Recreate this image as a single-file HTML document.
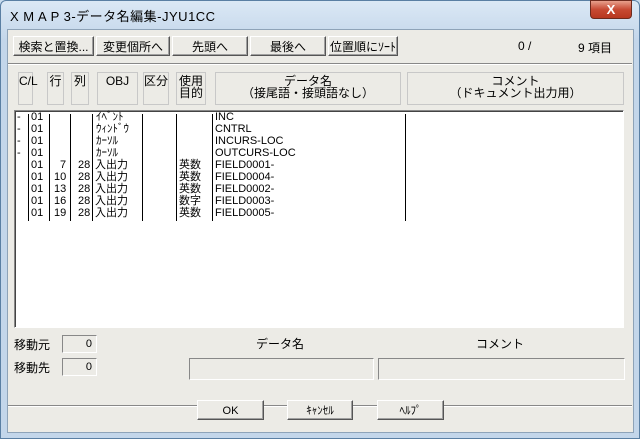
<html><head><style>
body{margin:0;width:640px;height:439px;background:#c9dcee;position:relative;overflow:hidden;font-family:"Liberation Sans","Noto Sans CJK JP",sans-serif;font-size:12px;color:#000}
.a{position:absolute;white-space:nowrap}
.frame{left:0;top:0;width:638px;height:437px;border:1px solid #5a7fa3;border-radius:6px 6px 0 0;background:linear-gradient(#dbe8f5,#c3d6ea 40px,#c3d6ea)}
.client{left:7px;top:29px;width:625px;height:402px;background:#ecebe6;border:1px solid #8ea3b8}
.btn{position:absolute;height:20px;background:#ecebe6;border:1px solid;border-color:#fff #555 #555 #fff;box-shadow:inset -1px -1px 0 #a0a0a0;text-align:center;line-height:20px;font-size:12px;box-sizing:border-box;white-space:nowrap}
.hd{position:absolute;top:72px;height:33px;border:1px solid #c8c8c8;font-size:12px;line-height:12px;text-align:center;box-sizing:border-box;padding-top:2px;white-space:nowrap}
.row{position:absolute;left:0;width:600px;height:12px;font-size:11px;line-height:12px;white-space:nowrap}
.row span{position:absolute;white-space:nowrap}
.vl{position:absolute;top:3px;height:107px;width:1px;background:#000}
.sunk{position:absolute;border:1px solid;border-color:#888 #fff #fff #888;box-sizing:border-box}
</style></head><body>
<div class="a frame"></div>
<div class="a" style="left:10px;top:6px;font-size:13px;letter-spacing:0.5px">X M A P 3-データ名編集-JYU1CC</div>
<div class="a" style="left:590px;top:0;width:42px;height:19px;border-radius:0 0 4px 4px;background:linear-gradient(#e8a08c,#c74a33 50%,#b83820);border:1px solid #6d2a1d;box-sizing:border-box;color:#fff;text-align:center;font-weight:bold;line-height:17px;font-size:13px">X</div>
<div class="a client"></div>
<div class="a" style="left:8px;top:63px;width:624px;height:1px;background:#888;border-bottom:1px solid #fff"></div>
<div class="btn" style="left:13px;top:36px;width:81px">検索と置換...</div>
<div class="btn" style="left:96px;top:36px;width:74px">変更個所へ</div>
<div class="btn" style="left:172px;top:36px;width:76px">先頭へ</div>
<div class="btn" style="left:250px;top:36px;width:76px">最後へ</div>
<div class="btn" style="left:328px;top:36px;width:70px">位置順にｿｰﾄ</div>
<div class="a" style="left:518px;top:39px">0 /</div>
<div class="a" style="left:578px;top:39px">9 項目</div>
<div class="hd" style="left:18px;width:15px">C/L</div>
<div class="hd" style="left:47px;width:17px">行</div>
<div class="hd" style="left:71px;width:18px">列</div>
<div class="hd" style="left:97px;width:41px">OBJ</div>
<div class="hd" style="left:143px;width:26px">区分</div>
<div class="hd" style="left:176px;width:30px">使用<br>目的</div>
<div class="hd" style="left:215px;width:186px">データ名<br>（接尾語・接頭語なし）</div>
<div class="hd" style="left:407px;width:217px">コメント<br>（ドキュメント出力用）</div>
<div class="a" style="left:14px;top:110px;width:610px;height:218px;background:#fff;border:1px solid;border-color:#888 #fff #fff #888;box-shadow:inset 1px 1px 0 #444;box-sizing:border-box">
<div class="vl" style="left:13px"></div><div class="vl" style="left:34px"></div><div class="vl" style="left:55px"></div><div class="vl" style="left:77px"></div><div class="vl" style="left:127px"></div><div class="vl" style="left:161px"></div><div class="vl" style="left:197px"></div><div class="vl" style="left:390px"></div>
</div>
<div class="a" style="left:14px;top:111px;width:610px">
<div class="row" style="top:0"><span style="left:3px">-</span><span style="left:17px">01</span><span style="left:82px">ｲﾍﾞﾝﾄ</span><span style="left:201px">INC</span></div>
<div class="row" style="top:12px"><span style="left:3px">-</span><span style="left:17px">01</span><span style="left:82px">ｳｨﾝﾄﾞｳ</span><span style="left:201px">CNTRL</span></div>
<div class="row" style="top:24px"><span style="left:3px">-</span><span style="left:17px">01</span><span style="left:82px">ｶｰｿﾙ</span><span style="left:201px">INCURS-LOC</span></div>
<div class="row" style="top:36px"><span style="left:3px">-</span><span style="left:17px">01</span><span style="left:82px">ｶｰｿﾙ</span><span style="left:201px">OUTCURS-LOC</span></div>
<div class="row" style="top:48px"><span style="left:17px">01</span><span style="left:46px">7</span><span style="left:64px">28</span><span style="left:81px">入出力</span><span style="left:165px">英数</span><span style="left:201px">FIELD0001-</span></div>
<div class="row" style="top:60px"><span style="left:17px">01</span><span style="left:40px">10</span><span style="left:64px">28</span><span style="left:81px">入出力</span><span style="left:165px">英数</span><span style="left:201px">FIELD0004-</span></div>
<div class="row" style="top:72px"><span style="left:17px">01</span><span style="left:40px">13</span><span style="left:64px">28</span><span style="left:81px">入出力</span><span style="left:165px">英数</span><span style="left:201px">FIELD0002-</span></div>
<div class="row" style="top:84px"><span style="left:17px">01</span><span style="left:40px">16</span><span style="left:64px">28</span><span style="left:81px">入出力</span><span style="left:165px">数字</span><span style="left:201px">FIELD0003-</span></div>
<div class="row" style="top:96px"><span style="left:17px">01</span><span style="left:40px">19</span><span style="left:64px">28</span><span style="left:81px">入出力</span><span style="left:165px">英数</span><span style="left:201px">FIELD0005-</span></div>
</div>
<div class="a" style="left:14px;top:336px">移動元</div>
<div class="sunk" style="left:62px;top:335px;width:35px;height:18px;text-align:right;padding-right:4px;line-height:16px;font-size:11px">0</div>
<div class="a" style="left:14px;top:359px">移動先</div>
<div class="sunk" style="left:62px;top:358px;width:35px;height:18px;text-align:right;padding-right:4px;line-height:16px;font-size:11px">0</div>
<div class="a" style="left:256px;top:335px">データ名</div>
<div class="a" style="left:476px;top:335px">コメント</div>
<div class="sunk" style="left:189px;top:358px;width:185px;height:22px"></div>
<div class="sunk" style="left:378px;top:358px;width:247px;height:22px"></div>
<div class="a" style="left:8px;top:405px;width:624px;height:1px;background:#888;border-bottom:1px solid #fff"></div>
<div class="btn" style="left:197px;top:400px;width:67px;font-size:11px">OK</div>
<div class="btn" style="left:287px;top:400px;width:66px;font-size:11px">ｷｬﾝｾﾙ</div>
<div class="btn" style="left:377px;top:400px;width:67px;font-size:11px">ﾍﾙﾌﾟ</div>
</body></html>
